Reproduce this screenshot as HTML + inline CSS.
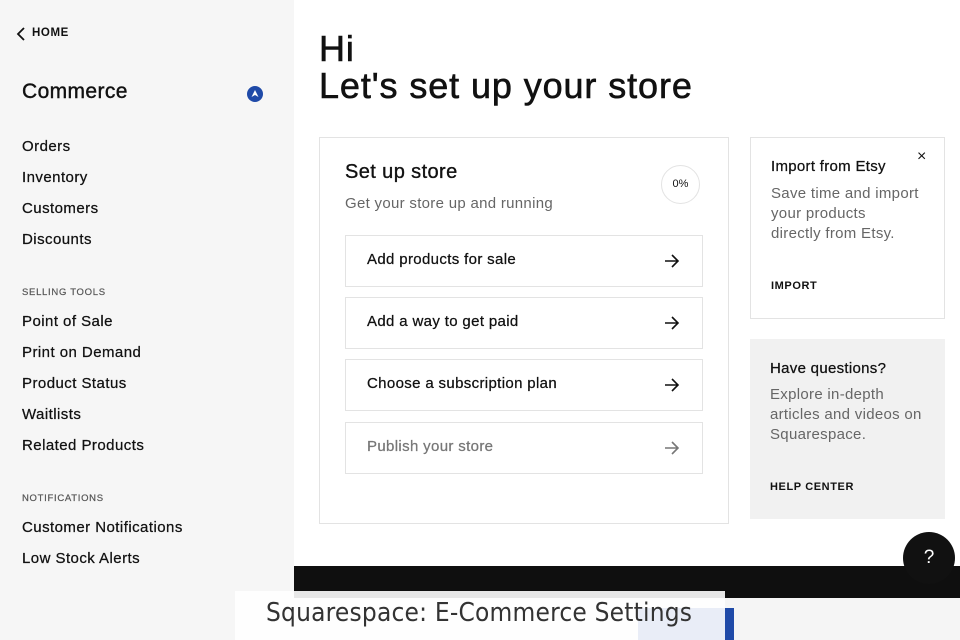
<!DOCTYPE html>
<html><head><style>
*{margin:0;padding:0;box-sizing:border-box}
body{width:960px;height:640px;overflow:hidden;position:relative;background:#fff;font-family:"Liberation Sans",sans-serif;color:#111}
.side{position:absolute;left:0;top:0;width:294px;height:640px;background:#f6f6f6}
.abs{position:absolute;white-space:nowrap}
.nav{font-size:15px;color:#111;letter-spacing:.45px;-webkit-text-stroke:.25px #111}
.sec{font-size:9.5px;letter-spacing:.7px;color:#555;-webkit-text-stroke:.2px #555}
.card{position:absolute;border:1px solid #e3e3e3;background:#fff}
.row{position:absolute;left:345px;width:358px;height:52px;border:1px solid #e3e3e3;font-size:15px;letter-spacing:.35px;-webkit-text-stroke:.25px currentColor}
.row span{position:absolute;left:21px;top:15px}
.row svg{position:absolute;right:22px;top:17px}
.b{font-weight:bold}
</style></head><body>
<div class="side"></div>
<svg class="abs" style="left:16px;top:27px" width="10" height="14"><path d="M8 1 L2 7 L8 13" fill="none" stroke="#111" stroke-width="1.8"/></svg>
<div class="abs b" style="left:32px;top:27px;font-size:11.5px;letter-spacing:.6px">HOME</div>
<div class="abs" style="left:22px;top:80px;font-size:21px;letter-spacing:.4px;-webkit-text-stroke:.4px #111">Commerce</div>
<svg class="abs" style="left:247px;top:86px" width="16" height="16"><circle cx="8" cy="8" r="8" fill="#1f4aa8"/><path d="M4.5 11 L8 4 L11.5 11 L8 9 Z" fill="#fff"/></svg>
<div class="abs nav" style="left:22px;top:138px">Orders</div>
<div class="abs nav" style="left:22px;top:169px">Inventory</div>
<div class="abs nav" style="left:22px;top:200px">Customers</div>
<div class="abs nav" style="left:22px;top:231px">Discounts</div>
<div class="abs sec" style="left:22px;top:287px">SELLING TOOLS</div>
<div class="abs nav" style="left:22px;top:313px">Point of Sale</div>
<div class="abs nav" style="left:22px;top:344px">Print on Demand</div>
<div class="abs nav" style="left:22px;top:375px">Product Status</div>
<div class="abs nav" style="left:22px;top:406px">Waitlists</div>
<div class="abs nav" style="left:22px;top:437px">Related Products</div>
<div class="abs sec" style="left:22px;top:493px">NOTIFICATIONS</div>
<div class="abs nav" style="left:22px;top:519px">Customer Notifications</div>
<div class="abs nav" style="left:22px;top:550px">Low Stock Alerts</div>

<div class="abs" style="left:319px;top:30px;font-size:36px;line-height:37px;letter-spacing:.9px;-webkit-text-stroke:.6px #111">Hi<br>Let's set up your store</div>

<div class="card" style="left:319px;top:137px;width:410px;height:387px"></div>
<div class="abs" style="left:345px;top:161px;font-size:20px;letter-spacing:.4px;-webkit-text-stroke:.35px #111">Set up store</div>
<div class="abs" style="left:345px;top:195px;font-size:15px;color:#666;letter-spacing:.3px">Get your store up and running</div>
<div class="abs" style="left:661px;top:165px;width:39px;height:39px;border:1.5px solid #e3e3e3;border-radius:50%;font-size:11px;text-align:center;line-height:36px">0%</div>
<div class="row" style="top:235px"><span>Add products for sale</span><svg width="16" height="16"><path d="M1 8 H14 M8 2 L14 8 L8 14" fill="none" stroke="#111" stroke-width="1.6"/></svg></div>
<div class="row" style="top:297px"><span>Add a way to get paid</span><svg width="16" height="16"><path d="M1 8 H14 M8 2 L14 8 L8 14" fill="none" stroke="#111" stroke-width="1.6"/></svg></div>
<div class="row" style="top:359px"><span>Choose a subscription plan</span><svg width="16" height="16"><path d="M1 8 H14 M8 2 L14 8 L8 14" fill="none" stroke="#111" stroke-width="1.6"/></svg></div>
<div class="row" style="top:422px;color:#777"><span>Publish your store</span><svg width="16" height="16"><path d="M1 8 H14 M8 2 L14 8 L8 14" fill="none" stroke="#777" stroke-width="1.6"/></svg></div>

<div class="card" style="left:750px;top:137px;width:195px;height:182px"></div>
<div class="abs" style="left:771px;top:158px;font-size:15px;letter-spacing:.3px;-webkit-text-stroke:.25px #111">Import from Etsy</div>
<div class="abs" style="left:917px;top:148px;font-size:16px">×</div>
<div class="abs" style="left:771px;top:184px;font-size:15px;color:#666;line-height:20px;letter-spacing:.3px">Save time and import<br>your products<br>directly from Etsy.</div>
<div class="abs b" style="left:771px;top:280px;font-size:11px;letter-spacing:.6px">IMPORT</div>

<div class="abs" style="left:750px;top:339px;width:195px;height:180px;background:#f1f1f1"></div>
<div class="abs" style="left:770px;top:360px;font-size:15px;letter-spacing:.3px;-webkit-text-stroke:.25px #111">Have questions?</div>
<div class="abs" style="left:770px;top:385px;font-size:15px;color:#666;line-height:20px;letter-spacing:.3px">Explore in-depth<br>articles and videos on<br>Squarespace.</div>
<div class="abs b" style="left:770px;top:481px;font-size:11px;letter-spacing:.6px">HELP CENTER</div>

<div class="abs" style="left:294px;top:566px;width:666px;height:32px;background:#0f0f0f"></div>
<div class="abs" style="left:294px;top:598px;width:666px;height:42px;background:#f5f5f5"></div>
<div class="abs" style="left:903px;top:532px;width:52px;height:52px;border-radius:50%;background:#111;color:#fff;font-size:19px;text-align:center;line-height:52px">?</div>
<div class="abs" style="left:638px;top:608px;width:96px;height:32px;background:#1f4aa8"></div>
<div class="abs" style="left:235px;top:591px;width:490px;height:49px;background:rgba(255,255,255,.9)"></div>
<div class="abs" style="left:266px;top:598px;font-size:26px;color:#333;letter-spacing:.2px;font-family:'DejaVu Sans Condensed','Liberation Sans Narrow',sans-serif">Squarespace: E-Commerce Settings</div>
</body></html>
